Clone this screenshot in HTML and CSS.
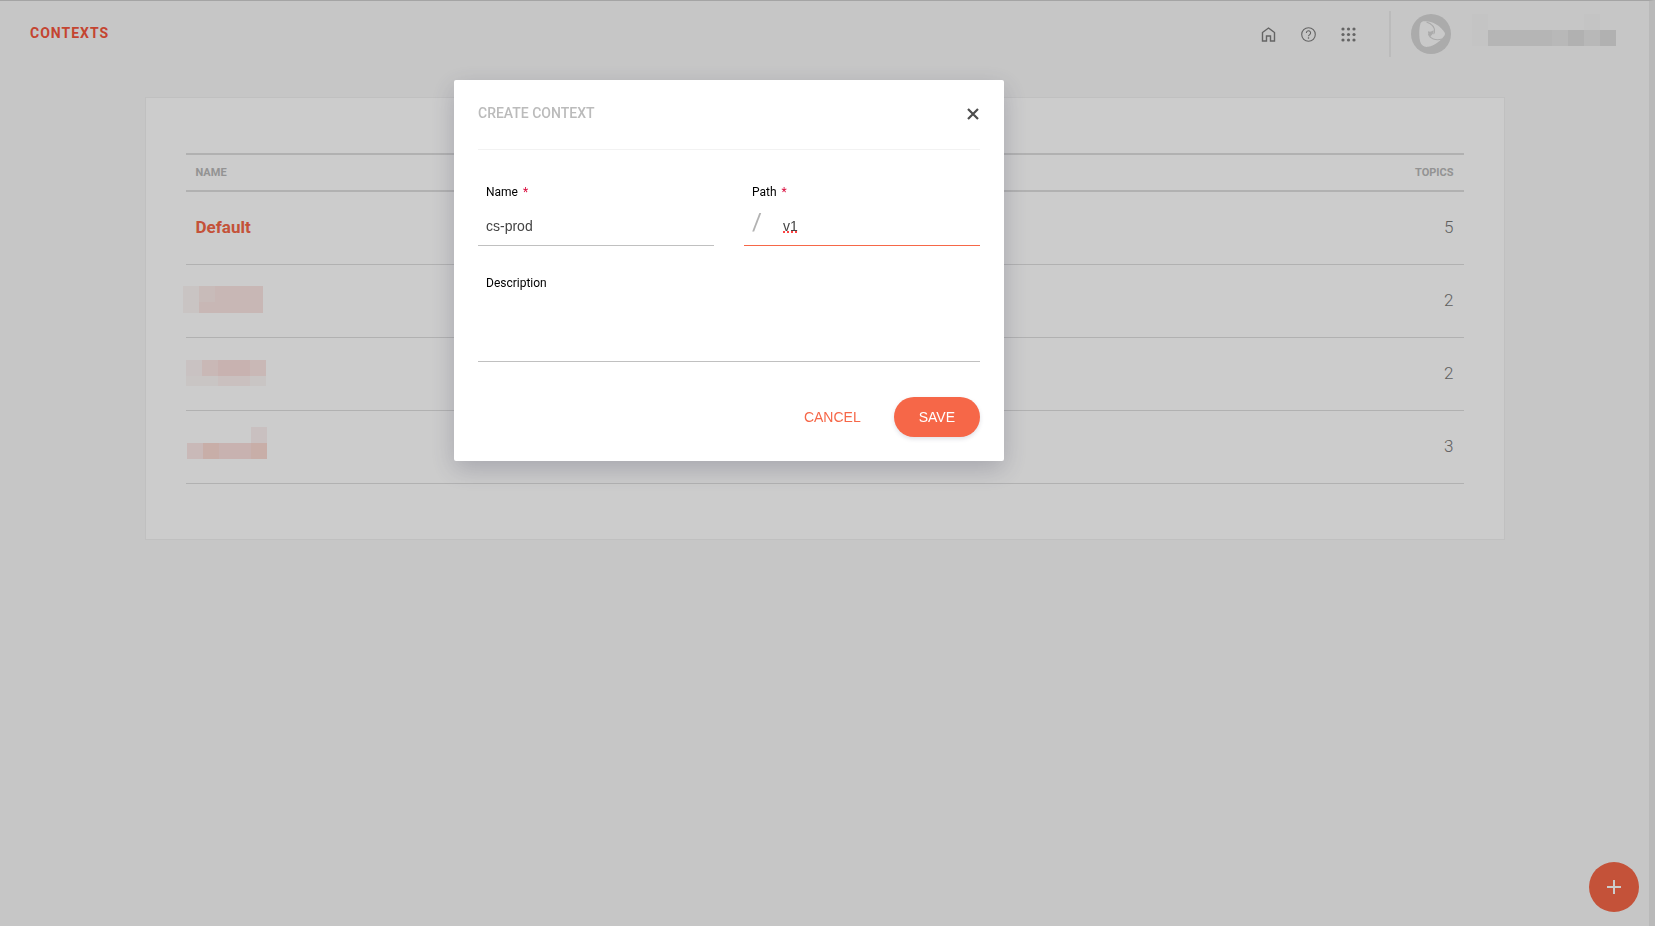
FILE: index.html
```
<!DOCTYPE html>
<html lang="en">
<head>
  <meta charset="UTF-8">
  <title>Contexts</title>
  <link rel="stylesheet" href="styles.css">
</head>
<body>
  <div class="page">
    <header class="topbar">
      <h1>Contexts</h1>
      <nav class="topnav">
        <a href="#" aria-label="Home">
          <svg width="15" height="15" viewBox="0 0 15 15"><path d="M1.500 5.500 7.500 1l6 4.500V14H9.500V9h-4v5h-4z" fill="none" stroke="#7d7d7d" stroke-width="1.400"/></svg>
        </a>
        <a href="#" aria-label="Help">
          <svg width="15" height="15" viewBox="0 0 15 15" fill="none" stroke="#7d7d7d"><circle cx="7.500" cy="7.500" r="6.800" stroke-width="1.100"/><path d="M5.400 6a2.100 2.100 0 1 1 3.300 1.600C8 8.100 7.500 8.500 7.500 9.300" stroke-width="1.100"/><path d="M7.500 10.300v1.400" stroke-width="1.300"/></svg>
        </a>
        <a href="#" aria-label="Applications">
          <svg width="15" height="15" viewBox="0 0 15 15" fill="#7d7d7d"><circle cx="2" cy="2" r="1.600"/><circle cx="7.500" cy="2" r="1.600"/><circle cx="13" cy="2" r="1.600"/><circle cx="2" cy="7.500" r="1.600"/><circle cx="7.500" cy="7.500" r="1.600"/><circle cx="13" cy="7.500" r="1.600"/><circle cx="2" cy="13" r="1.600"/><circle cx="7.500" cy="13" r="1.600"/><circle cx="13" cy="13" r="1.600"/></svg>
        </a>
      </nav>
      <div class="user">
        <svg class="avatar" width="40" height="40" viewBox="0 0 40 40">
          <circle cx="20" cy="20" r="20" fill="#d6d6d6"/>
          <path d="M9.500 9.500C10.500 7 13 7 17 7.500c7 .9 13 5.500 16.300 10.500.9 1.400.9 2.300 0 3.700C30 26.500 24 31.500 17 32.800c-4 .6-6.500-1.300-7.700-4.800C7.800 23 8 14 9.500 9.500z" fill="#fcfcfc"/>
          <path d="M15.500 8c4.500 1.500 8.500 5 8 10-.1 1-.5 1.500-1 2M17.500 20c1.500 4.500 7 7 13.500 5" fill="none" stroke="#d6d6d6" stroke-width="1.100"/>
          <path d="M17 17.300c2 .9 4 .3 5.500-1 .8 2.500-1.500 5-3.500 6.200-1.500-1.300-2-3-2-5.200z" fill="#d6d6d6"/>
        </svg>
        <svg class="user-name" width="144" height="32" viewBox="0 0 144 32" shape-rendering="crispEdges">
          <path d="M0 0h16v32H0z" fill="#f5f5f5"/>
          <path d="M112 0h16v16h-16z" fill="#f6f6f6"/>
          <path d="M16 16h80v16H16z" fill="#e3e3e3"/>
          <path d="M80 16h16v16H80zM112 16h16v16h-16z" fill="#e6e6e6"/>
          <path d="M96 16h16v16H96zM128 16h16v16h-16z" fill="#dedede"/>
        </svg>
      </div>
    </header>

    <main class="card">
      <table class="contexts">
        <thead>
          <tr><th>Name</th><th class="topics">Topics</th></tr>
        </thead>
        <tbody>
          <tr>
            <td><a href="#">Default</a></td>
            <td class="topics">5</td>
          </tr>
          <tr>
            <td>
              <svg class="masked" width="84" height="28" viewBox="0 0 84 28" shape-rendering="crispEdges"><path d="M1 0h16v27H1z" fill="#fcf6f4"/><path d="M17 0h16v16H17z" fill="#fbeae8"/><path d="M33 0h48v16H33zM17 16h64v11H17z" fill="#fbe5e3"/></svg>
            </td>
            <td class="topics">2</td>
          </tr>
          <tr>
            <td>
              <svg class="masked" width="84" height="26" viewBox="0 0 84 26" shape-rendering="crispEdges"><path d="M4 0h16v16H4z" fill="#fcf3f3"/><path d="M20 0h16v16H20zM68 0h16v16H68z" fill="#fce7e4"/><path d="M36 0h32v16H36z" fill="#fbdfdc"/><path d="M4 16h80v10H4z" fill="#fcf7f5"/><path d="M36 16h32v10H36z" fill="#fdf0ef"/></svg>
            </td>
            <td class="topics">2</td>
          </tr>
          <tr>
            <td>
              <svg class="masked" width="85" height="38" viewBox="0 0 85 38" shape-rendering="crispEdges"><path d="M69 0h16v16H69z" fill="#fcf1f1"/><path d="M5 16h16v16H5z" fill="#fce8e7"/><path d="M21 16h16v16H21zM69 16h16v16H69z" fill="#fbdad3"/><path d="M37 16h32v16H37z" fill="#fbdfdc"/></svg>
            </td>
            <td class="topics">3</td>
          </tr>
        </tbody>
      </table>
    </main>

    <button class="fab" aria-label="Create context">
      <svg width="14" height="14" viewBox="0 0 14 14"><path d="M7 0v14M0 7h14" stroke="#fff" stroke-width="2"/></svg>
    </button>
  </div>

  <div class="overlay">
    <form class="modal" role="dialog" aria-labelledby="modalTitle">
      <div class="modal-header">
        <h2 id="modalTitle">Create context</h2>
        <button type="button" class="close" aria-label="Close">
          <svg width="12" height="12" viewBox="0 0 12 12"><path d="M1 1l10 10M11 1 1 11" stroke="#4d4d4d" stroke-width="2.200"/></svg>
        </button>
      </div>
      <div class="row">
        <div class="field">
          <label for="name">Name <span class="required">*</span></label>
          <input id="name" type="text" value="cs-prod" required>
        </div>
        <div class="field">
          <label for="path">Path <span class="required">*</span></label>
          <div class="path-input">
            <span class="slash">/</span>
            <input id="path" class="misspelled" type="text" value="v1" required>
          </div>
        </div>
      </div>
      <div class="field">
        <label for="description">Description</label>
        <textarea id="description"></textarea>
      </div>
      <div class="actions">
        <button type="button" class="btn">Cancel</button>
        <button type="button" class="btn primary">Save</button>
      </div>
    </form>
  </div>
</body>
</html>
```
FILE: styles.css
```
* {
  box-sizing: border-box;
}
body {
  margin: 0;
  font-family: Roboto, sans-serif;
  font-size: 17px;
  color: #777;
}
button {
  border: none;
  padding: 0;
  background: transparent;
  cursor: pointer;
}
a {
  color: #f66748;
  text-decoration: none;
}
.page {
  min-height: 100vh;
  background: #f8f8f8;
  border-top: 1px solid #cecece;
  border-right: 6px solid #e8e8e8;
}
.topbar {
  display: flex;
  align-items: center;
  height: 66px;
  padding: 0 33px 0 30px;
}
.topbar h1 {
  flex: 1;
  margin: 0;
  padding-bottom: 2px;
  font-size: 14px;
  letter-spacing: 1px;
  text-transform: uppercase;
  color: #f6553c;
}
.topnav {
  display: flex;
  gap: 25px;
  padding-right: 33px;
}
.topnav a {
  display: flex;
}
.user {
  display: flex;
  align-items: center;
  height: 46px;
  padding-left: 20px;
  border-left: 2px solid #eaeaea;
}
.user-name {
  margin: 0 0 8px 21px;
}

/* contexts table */
.card {
  max-width: 1360px;
  margin: 30px auto 0;
  padding: 55px 40px;
  background: #fff;
  border: 1px solid #f0f0f0;
}
.contexts {
  width: 100%;
  border-collapse: separate;
  border-spacing: 0;
}
.contexts th {
  height: 39px;
  padding: 0 10px;
  border-top: 2px solid #dedede;
  border-bottom: 2px solid #dedede;
  font-size: 11px;
  text-align: left;
  text-transform: uppercase;
  color: #b8b8b8;
}
.contexts td {
  height: 73px;
  padding: 0 10px 2px;
  border-bottom: 1px solid #dedede;
  font-weight: 300;
}
.contexts td a {
  font-weight: 700;
}
.contexts .topics {
  text-align: right;
}
.masked {
  display: block;
  margin-left: -14px;
}
.fab {
  position: fixed;
  right: 16px;
  bottom: 14px;
  display: flex;
  align-items: center;
  justify-content: center;
  width: 50px;
  height: 50px;
  border-radius: 50%;
  background: #f66748;
}

/* create context dialog */
.overlay {
  position: fixed;
  inset: 0;
  display: flex;
  align-items: flex-start;
  justify-content: center;
  padding: 80px 197px 0 0;
  background: rgba(0, 0, 0, 0.2);
}
.modal {
  width: 550px;
  padding: 0 24px 24px;
  border-radius: 2px;
  background: #fff;
  box-shadow: 0 8px 24px rgba(50, 50, 80, 0.25);
}
.modal-header {
  display: flex;
  align-items: center;
  justify-content: space-between;
  height: 70px;
  margin-bottom: 34px;
  border-bottom: 1px solid #f2f2f2;
}
.modal-header h2 {
  margin: 0;
  padding-bottom: 4px;
  font-size: 14px;
  font-weight: 500;
  text-transform: uppercase;
  color: #bbb;
}
.close {
  display: flex;
  padding: 0 1px 1px 0;
}
.row {
  display: flex;
  gap: 30px;
  margin-bottom: 29px;
}
.field {
  flex: 1;
}
.field label {
  display: block;
  padding: 0 8px;
  font-size: 12px;
  line-height: 16px;
  color: #000;
}
.required {
  margin-left: 2px;
  color: #d9093a;
}
.field input,
.field textarea {
  display: block;
  width: 100%;
  height: 46px;
  padding: 6px 8px 0;
  border: none;
  border-bottom: 1px solid #c0c0c0;
  outline: none;
  background: transparent;
  font: 14px "Liberation Sans", Arial, sans-serif;
  color: #444;
  resize: none;
}
.field textarea {
  height: 71px;
}
.path-input {
  display: flex;
  height: 46px;
  padding-left: 8px;
  border-bottom: 1px solid #f66748;
}
.slash {
  width: 23px;
  padding-top: 8px;
  font-size: 24px;
  line-height: 28px;
  color: #b2b2b2;
}
.path-input input {
  flex: 1;
  min-width: 0;
  height: 45px;
  border: none;
}
.path-input .misspelled {
  text-decoration: underline dotted 2px #f44;
}
.actions {
  display: flex;
  justify-content: flex-end;
  gap: 8px;
  margin-top: 35px;
}
.btn {
  height: 40px;
  padding: 0 25px;
  border-radius: 20px;
  font: 14px "Liberation Sans", Arial, sans-serif;
  text-transform: uppercase;
  color: #f66748;
}
.btn.primary {
  background: #f66748;
  color: #fff;
  box-shadow: 0 2px 4px rgba(50, 50, 80, 0.15);
}
```
